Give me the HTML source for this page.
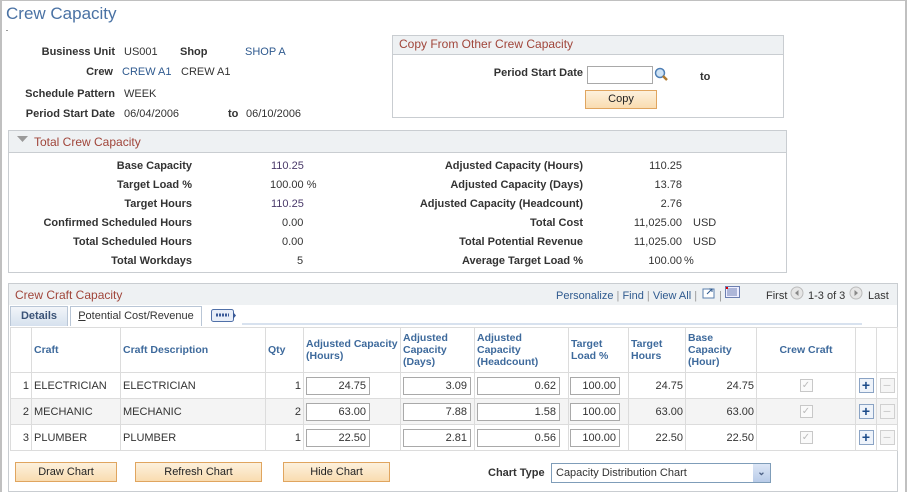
<!DOCTYPE html>
<html><head><meta charset="utf-8"><style>
*{box-sizing:border-box;margin:0;padding:0}
body{width:907px;height:492px;position:relative;background:#fff;font-family:"Liberation Sans",Arial,sans-serif;font-size:11px;color:#333;overflow:hidden}
.a{position:absolute;white-space:nowrap}
.b{font-weight:bold;color:#333}
.r{text-align:right}
.lnk{color:#2f5a8f}
.box{position:absolute;border:1px solid #c9cdd1;background:#fff}
.hd{position:absolute;left:0;right:0;top:0;background:#eef1f3;border-bottom:1px solid #c9cdd1;color:#a0453a;font-size:12px;padding-left:6px}
.inp{position:absolute;border:1px solid #a9a9a9;background:#fff;text-align:right;padding-right:3px;line-height:17px;font-size:11px}
.btn{position:absolute;background:linear-gradient(#fdf1dd,#f9dcb0);border:1px solid #e0a55f;text-align:center;font-size:11px;color:#222;line-height:19px}
table{border-collapse:collapse;position:absolute;left:10px;top:327px;table-layout:fixed}
td{border:1px solid #dcdcdc;font-size:11px;padding:0 2px;height:26px;position:relative}
th{border:1px solid #dcdcdc;font-size:10.5px;color:#3e6a9c;text-align:left;font-weight:bold;padding:0 2px;height:45px;background:#fff;line-height:12px;white-space:nowrap}
tr.g td{background:#f4f4f4}
.chk{display:inline-block;width:13px;height:13px;border:1px solid #c8c8c8;background:#fafafa;color:#bbb;font-size:10px;line-height:11px;text-align:center}
.pl{display:inline-block;width:15px;height:15px;border:1px solid #8aa3c4;background:#eef3fa;color:#1c4b8a;font-weight:bold;font-size:14px;line-height:12px;text-align:center}
.mi{display:inline-block;width:15px;height:15px;border:1px solid #d0d0d0;background:#f5f5f5;color:#ccc;font-size:14px;line-height:12px;text-align:center}
</style></head><body>
<div class="a" style="left:0;top:0;width:907px;height:492px;border:1px solid #c0c0c0;border-width:1px 2px 0 2px"></div>
<div class="a" style="left:6px;top:4px;font-size:17px;color:#4a72a4">Crew Capacity</div>
<div class="a" style="left:6px;top:30px;width:2px;height:1px;background:#999"></div>

<div class="a b r" style="left:0;top:46px;width:115px">Business Unit</div>
<div class="a" style="left:124px;top:46px">US001</div>
<div class="a b" style="left:180px;top:46px">Shop</div>
<div class="a lnk" style="left:245px;top:46px">SHOP A</div>
<div class="a b r" style="left:0;top:66px;width:113px">Crew</div>
<div class="a lnk" style="left:122px;top:66px">CREW A1</div>
<div class="a" style="left:181px;top:66px">CREW A1</div>
<div class="a b r" style="left:0;top:88px;width:115px">Schedule Pattern</div>
<div class="a" style="left:124px;top:88px">WEEK</div>
<div class="a b r" style="left:0;top:108px;width:115px">Period Start Date</div>
<div class="a" style="left:124px;top:108px">06/04/2006</div>
<div class="a b" style="left:228px;top:108px">to</div>
<div class="a" style="left:246px;top:108px">06/10/2006</div>

<div class="box" style="left:392px;top:35px;width:392px;height:83px">
 <div class="hd" style="height:19px;line-height:17px">Copy From Other Crew Capacity</div>
</div>
<div class="a b r" style="left:450px;top:67px;width:133px">Period Start Date</div>
<div class="inp" style="left:587px;top:66px;width:66px;height:18px"></div>
<svg class="a" style="left:654px;top:67px" width="15" height="15"><circle cx="6" cy="6" r="4.5" fill="#cfe3f5" stroke="#4f7fb5" stroke-width="1.5"/><line x1="9" y1="9" x2="13" y2="13" stroke="#b07a30" stroke-width="2.5"/></svg>
<div class="a b" style="left:700px;top:71px">to</div>
<div class="btn" style="left:585px;top:90px;width:72px;height:19px;line-height:17px">Copy</div>

<div class="box" style="left:8px;top:130px;width:779px;height:143px">
 <div class="hd" style="height:22px;line-height:22px;padding-left:25px">Total Crew Capacity</div>
</div>
<svg class="a" style="left:17px;top:136px" width="12" height="8"><path d="M0 0H11L5.5 6Z" fill="#9a9a9a"/></svg>

<div class="a b r" style="left:0;top:160px;width:192px">Base Capacity</div>
<div class="a b r" style="left:0;top:179px;width:192px">Target Load %</div>
<div class="a b r" style="left:0;top:198px;width:192px">Target Hours</div>
<div class="a b r" style="left:0;top:217px;width:192px">Confirmed Scheduled Hours</div>
<div class="a b r" style="left:0;top:236px;width:192px">Total Scheduled Hours</div>
<div class="a b r" style="left:0;top:255px;width:192px">Total Workdays</div>
<div class="a" style="left:271px;top:160px;color:#4a3a6a">110.25</div>
<div class="a" style="left:270px;top:179px">100.00 %</div>
<div class="a" style="left:271px;top:198px;color:#4a3a6a">110.25</div>
<div class="a" style="left:282px;top:217px">0.00</div>
<div class="a" style="left:282px;top:236px">0.00</div>
<div class="a" style="left:297px;top:255px">5</div>

<div class="a b r" style="left:380px;top:160px;width:203px">Adjusted Capacity (Hours)</div>
<div class="a b r" style="left:380px;top:179px;width:203px">Adjusted Capacity (Days)</div>
<div class="a b r" style="left:380px;top:198px;width:203px">Adjusted Capacity (Headcount)</div>
<div class="a b r" style="left:380px;top:217px;width:203px">Total Cost</div>
<div class="a b r" style="left:380px;top:236px;width:203px">Total Potential Revenue</div>
<div class="a b r" style="left:380px;top:255px;width:203px">Average Target Load %</div>
<div class="a r" style="left:600px;top:160px;width:82px">110.25</div>
<div class="a r" style="left:600px;top:179px;width:82px">13.78</div>
<div class="a r" style="left:600px;top:198px;width:82px">2.76</div>
<div class="a r" style="left:600px;top:217px;width:82px">11,025.00</div>
<div class="a r" style="left:600px;top:236px;width:82px">11,025.00</div>
<div class="a r" style="left:600px;top:255px;width:82px">100.00</div>
<div class="a" style="left:693px;top:217px">USD</div>
<div class="a" style="left:693px;top:236px">USD</div>
<div class="a" style="left:684px;top:255px">%</div>

<div class="box" style="left:8px;top:283px;width:890px;height:209px">
 <div class="hd" style="height:22px;line-height:22px;border-bottom:none">Crew Craft Capacity</div>
</div>
<div class="a" style="left:556px;top:290px;color:#2f5a8f">Personalize <span style="color:#999">|</span> Find <span style="color:#999">|</span> View All <span style="color:#999">|</span></div>
<svg class="a" style="left:702px;top:287px" width="14" height="12"><rect x="1" y="2" width="11" height="9" fill="#fff" stroke="#5a7fae"/><path d="M5 7L10 2M7 2H10V5" stroke="#2f5a8f" fill="none"/></svg>
<div class="a" style="left:719px;top:290px;color:#999">|</div>
<svg class="a" style="left:725px;top:286px" width="15" height="12"><rect x="0.5" y="0.5" width="14" height="11" fill="#eef" stroke="#6c7fb0"/><path d="M3 2V10M5 2V10M7 2V10M9 2V10M11 2V10" stroke="#6c7fb0"/><rect x="1" y="1" width="2" height="2" fill="#d00"/></svg>
<div class="a" style="left:766px;top:290px">First</div>
<svg class="a" style="left:790px;top:286px" width="14" height="14"><circle cx="7" cy="7" r="6" fill="#e6e6e6" stroke="#bbb"/><path d="M8.5 4L5 7L8.5 10Z" fill="#888"/></svg>
<div class="a" style="left:808px;top:290px">1-3 of 3</div>
<svg class="a" style="left:849px;top:286px" width="14" height="14"><circle cx="7" cy="7" r="6" fill="#e6e6e6" stroke="#bbb"/><path d="M5.5 4L9 7L5.5 10Z" fill="#888"/></svg>
<div class="a" style="left:868px;top:290px">Last</div>

<div class="a" style="left:9px;top:305px;width:888px;height:22px;background:#fff"></div>
<div class="a" style="left:10px;top:306px;width:58px;height:20px;background:linear-gradient(#f2f5f9,#d6e1ee);border:1px solid #b9c6d6;border-bottom:none;text-align:center;line-height:19px;font-weight:bold;color:#3b5377">Details</div>
<div class="a" style="left:70px;top:306px;width:132px;height:20px;background:#fff;border:1px solid #b9c6d6;border-bottom:none;text-align:center;line-height:19px;color:#333"><u>P</u>otential Cost/Revenue</div>
<svg class="a" style="left:211px;top:309px" width="26" height="13"><rect x="0.5" y="0.5" width="22" height="12" rx="2" fill="#e8eef8" stroke="#5070a8"/><path d="M22 3L25 6.5L22 10Z" fill="#3a5a98"/><path d="M5 6H18" stroke="#3a5a98" stroke-width="3" stroke-dasharray="2 1"/></svg>
<div class="a" style="left:242px;top:323px;width:620px;height:2px;background:#d8e2ef"></div>

<table>
<colgroup><col style="width:21px"><col style="width:89px"><col style="width:145px"><col style="width:38px"><col style="width:97px"><col style="width:74px"><col style="width:94px"><col style="width:60px"><col style="width:57px"><col style="width:71px"><col style="width:99px"><col style="width:21px"><col style="width:21px"></colgroup>
<tr><th></th><th>Craft</th><th>Craft Description</th><th>Qty</th><th>Adjusted Capacity<br>(Hours)</th><th>Adjusted<br>Capacity<br>(Days)</th><th>Adjusted<br>Capacity<br>(Headcount)</th><th>Target<br>Load %</th><th>Target<br>Hours</th><th>Base<br>Capacity<br>(Hour)</th><th style="text-align:center">Crew Craft</th><th></th><th></th></tr>
<tr><td class="r">1</td><td>ELECTRICIAN</td><td>ELECTRICIAN</td><td class="r">1</td><td><div class="inp" style="left:2px;top:4px;width:64px;height:18px">24.75</div></td><td><div class="inp" style="left:2px;top:4px;width:68px;height:18px">3.09</div></td><td><div class="inp" style="left:2px;top:4px;width:83px;height:18px">0.62</div></td><td><div class="inp" style="left:1px;top:4px;width:50px;height:18px">100.00</div></td><td class="r">24.75</td><td class="r">24.75</td><td style="text-align:center"><span class="chk">✓</span></td><td style="text-align:center"><span class="pl">+</span></td><td style="text-align:center"><span class="mi">−</span></td></tr>
<tr class="g"><td class="r">2</td><td>MECHANIC</td><td>MECHANIC</td><td class="r">2</td><td><div class="inp" style="left:2px;top:4px;width:64px;height:18px">63.00</div></td><td><div class="inp" style="left:2px;top:4px;width:68px;height:18px">7.88</div></td><td><div class="inp" style="left:2px;top:4px;width:83px;height:18px">1.58</div></td><td><div class="inp" style="left:1px;top:4px;width:50px;height:18px">100.00</div></td><td class="r">63.00</td><td class="r">63.00</td><td style="text-align:center"><span class="chk">✓</span></td><td style="text-align:center"><span class="pl">+</span></td><td style="text-align:center"><span class="mi">−</span></td></tr>
<tr><td class="r">3</td><td>PLUMBER</td><td>PLUMBER</td><td class="r">1</td><td><div class="inp" style="left:2px;top:4px;width:64px;height:18px">22.50</div></td><td><div class="inp" style="left:2px;top:4px;width:68px;height:18px">2.81</div></td><td><div class="inp" style="left:2px;top:4px;width:83px;height:18px">0.56</div></td><td><div class="inp" style="left:1px;top:4px;width:50px;height:18px">100.00</div></td><td class="r">22.50</td><td class="r">22.50</td><td style="text-align:center"><span class="chk">✓</span></td><td style="text-align:center"><span class="pl">+</span></td><td style="text-align:center"><span class="mi">−</span></td></tr>
</table>

<div class="btn" style="left:15px;top:462px;width:102px;height:20px">Draw Chart</div>
<div class="btn" style="left:135px;top:462px;width:127px;height:20px">Refresh Chart</div>
<div class="btn" style="left:283px;top:462px;width:107px;height:20px">Hide Chart</div>
<div class="a b" style="left:488px;top:467px">Chart Type</div>
<div class="a" style="left:551px;top:463px;width:220px;height:20px;border:1px solid #7f9db9;background:#fff;padding-left:4px;line-height:18px">Capacity Distribution Chart</div>
<div class="a" style="left:753px;top:464px;width:17px;height:18px;background:linear-gradient(#dce6f6,#b8cbe8);color:#4d6185;text-align:center;font-size:10px;line-height:18px;font-weight:bold">⌄</div>
</body></html>
